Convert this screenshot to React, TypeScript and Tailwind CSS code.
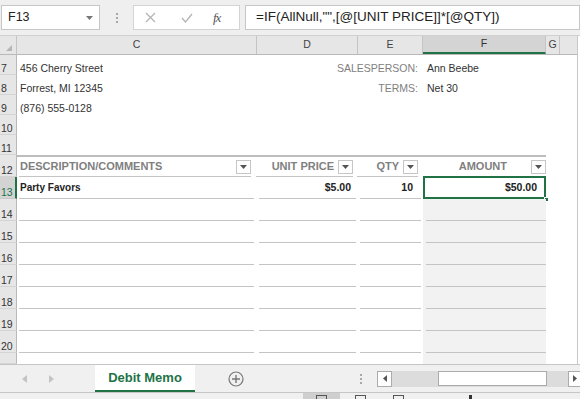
import { ReactNode } from "react";

function Filter() {
  return (
    <span className="w-[15px] h-[14px] shrink-0 bg-white border border-[#c6c6c6] flex items-center justify-center">
      <svg width="7" height="4" viewBox="0 0 7 4">
        <path d="M0 0h7L3.5 4z" fill="#555" />
      </svg>
    </span>
  );
}

function RowHead({ n, active, hideNum }: { n: number; active?: boolean; hideNum?: boolean }) {
  return (
    <div
      className={
        active
          ? "w-[17px] shrink-0 h-full bg-[#d3d3d3] border-r-2 border-r-[#217346] border-b border-b-[#c8c8c8] flex items-end pl-[1px] pb-[1px] text-[10.5px] leading-none text-[#217346]"
          : "w-[17px] shrink-0 h-full bg-[#e6e6e6] border-r border-r-[#b9b9b9] border-b border-b-[#d4d4d4] flex items-end pl-[1px] pb-[1px] text-[10.5px] leading-none text-[#333]"
      }
    >
      {hideNum ? null : n}
    </div>
  );
}

function InfoRow({
  n,
  c,
  label,
  value,
}: {
  n: number;
  c?: string;
  label?: string;
  value?: string;
}) {
  return (
    <div className="flex h-[20px]">
      <RowHead n={n} />
      <div className="w-[240px] flex items-end pl-[3px] pb-[2px] text-[10.5px] leading-none text-[#333]">
        {c}
      </div>
      <div className="w-[166px] flex items-end justify-end pr-[5px] pb-[2px] text-[10.5px] leading-none text-[#808080]">
        {label}
      </div>
      <div className="w-[123px] flex items-end pl-[4px] pb-[2px] text-[10.5px] leading-none text-[#333]">
        {value}
      </div>
      <div className="flex-1" />
    </div>
  );
}

function TableRow({
  n,
  c,
  d,
  e,
  f,
  active,
  partial,
}: {
  n: number;
  c?: ReactNode;
  d?: ReactNode;
  e?: ReactNode;
  f?: ReactNode;
  active?: boolean;
  partial?: boolean;
}) {
  const line = partial ? "" : "border-b border-[#c4c4c4]";
  return (
    <div className={partial ? "flex h-[11px]" : "flex h-[22px]"}>
      <RowHead n={n} active={active} hideNum={partial} />
      <div className="w-[240px] h-full pl-[2px] pr-[3px]">
        <div className={`h-full flex items-center pl-[1px] text-[10px] font-bold text-[#222] ${line}`}>
          {c}
        </div>
      </div>
      <div className="w-[101px] h-full px-[2px]">
        <div className={`h-full flex items-center justify-end pr-[5px] text-[10.5px] font-bold text-[#222] ${line}`}>
          {d}
        </div>
      </div>
      <div className="w-[65px] h-full px-[2px]">
        <div className={`h-full flex items-center justify-end pr-[8px] text-[10.5px] font-bold text-[#222] ${line}`}>
          {e}
        </div>
      </div>
      <div
        className={
          active
            ? "relative w-[123px] h-full pl-[3px] bg-white"
            : "relative w-[123px] h-full pl-[3px] bg-[#f2f2f2]"
        }
      >
        <div className={`h-full flex items-center justify-end pr-[9px] text-[10.5px] font-bold text-[#222] ${line}`}>
          {f}
        </div>
        {active && (
          <>
            <div className="absolute left-0 right-0 top-[-1px] bottom-0 border-2 border-[#217346]" />
            <div className="absolute right-[-3px] bottom-[-3px] w-[5px] h-[5px] bg-[#217346] border border-white" />
          </>
        )}
      </div>
      <div className="flex-1" />
    </div>
  );
}

export default function App() {
  return (
    <div className="w-[580px] h-[399px] overflow-hidden bg-white font-['Liberation_Sans',Arial,sans-serif] flex flex-col">
      {/* formula bar */}
      <div className="h-[36px] shrink-0 bg-[#efefef] border-b border-[#d0d0d0] flex items-start pt-[5px]">
        <div className="ml-[1px] w-[99px] h-[25px] bg-white border border-[#c6c6c6] flex items-center justify-between pl-[6px] pr-[6px]">
          <span className="text-[12.5px] text-[#222]">F13</span>
          <svg width="7" height="4" viewBox="0 0 7 4">
            <path d="M0 0h7L3.5 4z" fill="#777" />
          </svg>
        </div>
        <div className="w-[33px] h-[25px] flex flex-col items-center justify-center gap-[2px]">
          <span className="w-[2px] h-[2px] bg-[#a8a8a8]" />
          <span className="w-[2px] h-[2px] bg-[#a8a8a8]" />
          <span className="w-[2px] h-[2px] bg-[#a8a8a8]" />
        </div>
        <div className="w-[107px] h-[25px] bg-white border border-[#d4d4d4] flex items-center">
          <svg className="ml-[11px]" width="11" height="11" viewBox="0 0 11 11">
            <path d="M1 1l9 9M10 1l-9 9" stroke="#b4b4b4" strokeWidth="1.3" />
          </svg>
          <svg className="ml-[25px]" width="12" height="10" viewBox="0 0 12 10">
            <path d="M1 5l3.5 4L11 1" stroke="#b4b4b4" strokeWidth="1.3" fill="none" />
          </svg>
          <span className="ml-[20px] text-[13px] italic text-[#555] font-['Liberation_Serif',serif] tracking-[-1px]">
            fx
          </span>
        </div>
        <div className="ml-[5px] flex-1 h-[25px] bg-white border border-[#c6c6c6] flex items-center pl-[10px] text-[13.5px] text-[#222] whitespace-nowrap">
          =IF(AllNull,"",[@[UNIT PRICE]]*[@QTY])
        </div>
      </div>

      <div className="w-[578px] border-r border-[#c8c8c8] flex flex-col">
        {/* column headers */}
        <div className="h-[19px] shrink-0 bg-[#e6e6e6] border-b border-[#b9b9b9] flex text-[10.5px] text-[#444]">
          <div className="w-[17px] border-r border-[#c4c4c4] flex items-end justify-end pr-[4px] pb-[3px]">
            <svg width="6" height="6" viewBox="0 0 6 6">
              <path d="M6 0v6H0z" fill="#b5b5b5" />
            </svg>
          </div>
          <div className="w-[240px] border-r border-[#c4c4c4] flex items-center justify-center">C</div>
          <div className="w-[101px] border-r border-[#c4c4c4] flex items-center justify-center">D</div>
          <div className="w-[65px] border-r border-[#c4c4c4] flex items-center justify-center">E</div>
          <div className="w-[123px] bg-[#d4d4d4] border-b-2 border-[#217346] border-r border-r-[#c4c4c4] flex items-center justify-center text-[#333]">
            F
          </div>
          <div className="w-[14px] border-r border-[#c4c4c4] flex items-center justify-center">G</div>
          <div className="flex-1" />
        </div>

        {/* info rows */}
        <InfoRow n={7} c="456 Cherry Street" label="SALESPERSON:" value="Ann Beebe" />
        <InfoRow n={8} c="Forrest, MI 12345" label="TERMS:" value="Net 30" />
        <InfoRow n={9} c="(876) 555-0128" />
        <InfoRow n={10} />
        <InfoRow n={11} />

        {/* table header */}
        <div className="flex h-[22px]">
          <RowHead n={12} />
          <div className="w-[529px] pl-[2px] flex border-t-2 border-[#bdbdbd]">
            <div className="w-[235px] pr-[3px]">
              <div className="h-full flex items-center justify-between pl-[1px] border-b border-[#c4c4c4] text-[11px] font-bold text-[#7f7f7f]">
                DESCRIPTION/COMMENTS
                <Filter />
              </div>
            </div>
            <div className="w-[101px] px-[2px]">
              <div className="h-full flex items-center justify-end gap-[4px] border-b border-[#c4c4c4] text-[11px] font-bold text-[#7f7f7f]">
                UNIT PRICE
                <Filter />
              </div>
            </div>
            <div className="w-[65px] px-[2px]">
              <div className="h-full flex items-center justify-end gap-[4px] border-b border-[#c4c4c4] text-[11px] font-bold text-[#7f7f7f]">
                QTY
                <Filter />
              </div>
            </div>
            <div className="w-[126px] pl-[3px]">
              <div className="h-full flex items-center justify-end border-b border-[#c4c4c4] text-[11px] font-bold text-[#7f7f7f]">
                <span className="mr-[24px]">AMOUNT</span>
                <Filter />
              </div>
            </div>
          </div>
          <div className="flex-1" />
        </div>

        <TableRow n={13} c="Party Favors" d="$5.00" e="10" f="$50.00" active />
        <TableRow n={14} />
        <TableRow n={15} />
        <TableRow n={16} />
        <TableRow n={17} />
        <TableRow n={18} />
        <TableRow n={19} />
        <TableRow n={20} />
        <TableRow n={21} partial />
      </div>

      {/* sheet tabs */}
      <div className="h-[28px] shrink-0 bg-[#f0f0f0] border-t border-[#c6c6c6] flex items-stretch">
        <div className="w-[95px] flex items-center">
          <svg className="ml-[22px]" width="5" height="8" viewBox="0 0 5 8">
            <path d="M5 0v8L0 4z" fill="#c4c4c4" />
          </svg>
          <svg className="ml-[22px]" width="5" height="8" viewBox="0 0 5 8">
            <path d="M0 0v8l5-4z" fill="#c4c4c4" />
          </svg>
        </div>
        <div className="w-[100px] bg-white border-b-2 border-[#217346] flex items-center justify-center text-[13px] font-bold text-[#217346]">
          Debit Memo
        </div>
        <div className="w-[82px] flex items-center justify-center">
          <svg width="16" height="16" viewBox="0 0 16 16">
            <circle cx="8" cy="8" r="7" fill="none" stroke="#777" strokeWidth="1.2" />
            <path d="M8 4v8M4 8h8" stroke="#777" strokeWidth="1.4" />
          </svg>
        </div>
        <div className="w-[100px] flex flex-col items-center justify-center gap-[2px] pl-[68px]">
          <span className="w-[2px] h-[2px] bg-[#a8a8a8]" />
          <span className="w-[2px] h-[2px] bg-[#a8a8a8]" />
          <span className="w-[2px] h-[2px] bg-[#a8a8a8]" />
        </div>
        <div className="w-[203px] flex items-center">
          <div className="w-[15px] h-[16px] shrink-0 bg-white border border-[#ababab] flex items-center justify-center">
            <svg width="4" height="7" viewBox="0 0 4 7">
              <path d="M4 0v7L0 3.5z" fill="#555" />
            </svg>
          </div>
          <div className="w-[176px] h-[16px] bg-[#dcdcdc] flex items-center">
            <div className="ml-[46px] w-[109px] h-[15px] bg-white border border-[#ababab]" />
          </div>
          <div className="w-[12px] h-[16px] shrink-0 bg-white border border-[#ababab] border-r-0 flex items-center justify-center">
            <svg width="4" height="7" viewBox="0 0 4 7">
              <path d="M0 0v7l4-3.5z" fill="#555" />
            </svg>
          </div>
        </div>
      </div>

      {/* status bar */}
      <div className="h-[7px] shrink-0 bg-[#f0f0f0] border-t border-[#c6c6c6] flex items-start">
        <div className="ml-[303px] w-[37px] h-full bg-[#cfcfcf] flex justify-center pt-[2px]">
          <span className="w-[11px] h-[4px] border border-b-0 border-[#555]" />
        </div>
        <div className="w-[40px] flex justify-center pt-[2px]">
          <span className="w-[11px] h-[4px] border border-b-0 border-[#555]" />
        </div>
        <div className="w-[37px] flex justify-center pt-[2px]">
          <span className="w-[11px] h-[4px] border border-b-0 border-[#555]" />
        </div>
        <div className="ml-[52px] w-[3px] h-[4px] mt-[2px] bg-[#333]" />
      </div>
    </div>
  );
}
